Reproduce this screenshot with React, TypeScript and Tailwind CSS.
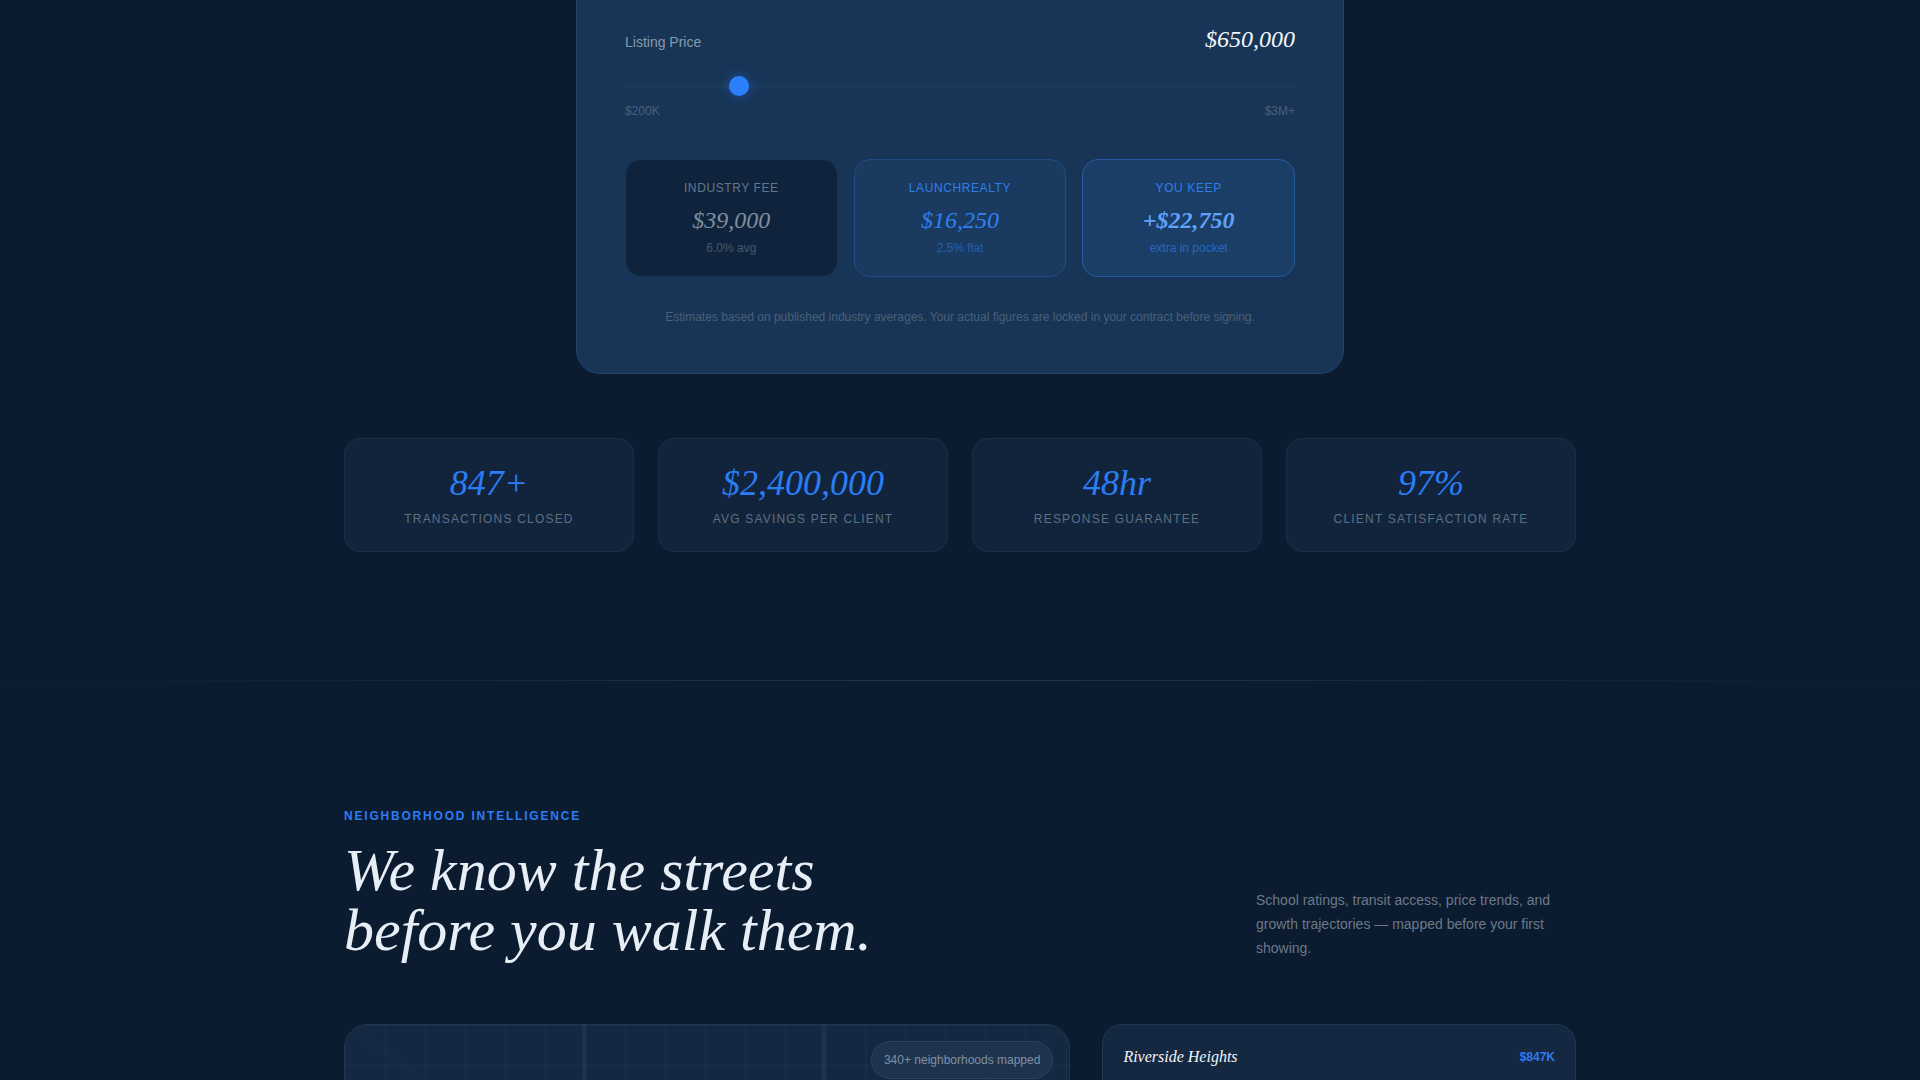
import { useState } from "react"

const serif = "font-['Liberation_Serif',serif] italic"

const stats = [
  { value: "847+", label: "Transactions closed" },
  { value: "$2,400,000", label: "Avg savings per client" },
  { value: "48hr", label: "Response guarantee" },
  { value: "97%", label: "Client satisfaction rate" },
]

const usd = (n: number) => "$" + Math.round(n).toLocaleString("en-US")

function SavingsCalculator() {
  const [price, setPrice] = useState(650000)
  const industry = price * 0.06
  const ours = price * 0.025

  const boxes = [
    {
      title: "Industry fee",
      value: usd(industry),
      sub: "6.0% avg",
      box: "bg-[#0f243c] border-[#173350]",
      titleColor: "text-[#66768a]",
      valueColor: "text-[#7f8d9f]",
      subColor: "text-[#46576c]",
    },
    {
      title: "LaunchRealty",
      value: usd(ours),
      sub: "2.5% flat",
      box: "bg-[#1a3a60] border-[#214b87]",
      titleColor: "text-[#2f7eea]",
      valueColor: "text-[#2f80f3]",
      subColor: "text-[#255fb2]",
    },
    {
      title: "You keep",
      value: "+" + usd(industry - ours),
      sub: "extra in pocket",
      box: "bg-[#1b3e67] border-[#245a9f]",
      titleColor: "text-[#2f7eea]",
      valueColor: "text-[#60a1fa] font-bold",
      subColor: "text-[#2867bd]",
    },
  ]

  return (
    <div className="mx-auto max-w-3xl rounded-b-3xl border border-t-0 border-[#1e4468] bg-[#183557] px-12 pt-[23px] pb-12">
      <div className="flex items-baseline justify-between">
        <label htmlFor="price" className="text-sm text-[#8799ad]">Listing Price</label>
        <output htmlFor="price" className={`${serif} text-2xl text-[#f1f5f9]`}>{usd(price)}</output>
      </div>
      <input
        id="price"
        type="range"
        min={200000}
        max={3000000}
        step={10000}
        value={price}
        onChange={(e) => setPrice(Number(e.target.value))}
        className="mt-5 block h-[22px] w-full cursor-pointer appearance-none bg-transparent [&::-webkit-slider-runnable-track]:h-1.5 [&::-webkit-slider-runnable-track]:rounded-full [&::-webkit-slider-runnable-track]:bg-[#1b3a5a] [&::-webkit-slider-thumb]:-mt-[7px] [&::-webkit-slider-thumb]:size-5 [&::-webkit-slider-thumb]:appearance-none [&::-webkit-slider-thumb]:rounded-full [&::-webkit-slider-thumb]:bg-[#2d80fc] [&::-webkit-slider-thumb]:shadow-[0_0_12px_rgba(43,127,255,0.4)]"
      />
      <div className="mt-1.5 flex justify-between text-xs text-[#4a6079]">
        <span>$200K</span>
        <span>$3M+</span>
      </div>

      <div className="mt-10 grid grid-cols-3 gap-4 text-center">
        {boxes.map((b) => (
          <div key={b.title} className={`rounded-2xl border p-5 ${b.box}`}>
            <p className={`text-xs uppercase tracking-[0.6px] ${b.titleColor}`}>{b.title}</p>
            <p className={`mt-2 text-2xl ${serif} ${b.valueColor}`}>{b.value}</p>
            <p className={`mt-1 text-xs ${b.subColor}`}>{b.sub}</p>
          </div>
        ))}
      </div>

      <p className="mt-8 text-center text-xs text-[#4a6079]">
        Estimates based on published industry averages. Your actual figures are locked in your contract before signing.
      </p>
    </div>
  )
}

function NeighborhoodMap() {
  return (
    <div className="relative col-span-3 h-[500px] overflow-hidden rounded-3xl border border-[#21364f] bg-[#142842]">
      <svg aria-hidden className="block h-full w-full" fill="none">
        <defs>
          <pattern id="blocks" width="40" height="40" patternUnits="userSpaceOnUse">
            <path d="M1 0V40M0 0.5H40" stroke="#fff" strokeOpacity="0.04" strokeWidth="1" />
          </pattern>
        </defs>
        <rect width="100%" height="100%" fill="url(#blocks)" />
        <path d="M239 0V500M478.5 0V500" stroke="#fff" strokeOpacity="0.05" strokeWidth="4" />
        <path d="M0 0L720 500M724 0L0 500" stroke="#fff" strokeOpacity="0.012" strokeWidth="8" />
      </svg>
      <div className="absolute top-4 right-4 rounded-full border border-[#2c435d] bg-[#1e334d] px-3 py-2 text-xs leading-5 text-[#8190a3]">
        340+ neighborhoods mapped
      </div>
    </div>
  )
}

export default function App() {
  return (
    <main className="h-screen overflow-hidden bg-[#0b1b30] font-['Liberation_Sans',sans-serif]">
      <section className="mx-auto max-w-7xl px-6 pb-32">
        <SavingsCalculator />
        <div className="mt-16 grid grid-cols-4 gap-6">
          {stats.map((s) => (
            <div key={s.label} className="rounded-2xl border border-[#1c2f47] bg-[#11243c] p-6 text-center">
              <p className={`${serif} text-4xl text-[#2b7df5]`}>{s.value}</p>
              <p className="mt-2 text-xs uppercase tracking-[1.2px] text-[#5f6f82]">{s.label}</p>
            </div>
          ))}
        </div>
      </section>

      <div className="-mb-px h-px bg-linear-to-r from-transparent via-[#1e3654] to-transparent" />

      <section className="mx-auto max-w-7xl px-6 py-32">
        <div className="flex items-end justify-between">
          <div>
            <p className="text-xs font-bold uppercase tracking-[1.8px] text-[#2b7df5]">Neighborhood intelligence</p>
            <h2 className={`${serif} mt-4 text-6xl leading-[60px] text-[#e8eef5]`}>
              We know the streets
              <br />
              before you walk them.
            </h2>
          </div>
          <p className="w-80 text-sm leading-6 text-[#6b7988]">
            School ratings, transit access, price trends, and growth trajectories — mapped before your first showing.
          </p>
        </div>

        <div className="mt-16 grid grid-cols-5 items-start gap-8">
          <NeighborhoodMap />
          <div className="col-span-2 flex items-center justify-between rounded-[20px] border border-[#21364f] bg-[#142842] p-5 pb-16">
            <h3 className={`${serif} text-base text-[#f1f5f9]`}>Riverside Heights</h3>
            <span className="text-xs font-bold text-[#2f7bf0]">$847K</span>
          </div>
        </div>
      </section>
    </main>
  )
}
